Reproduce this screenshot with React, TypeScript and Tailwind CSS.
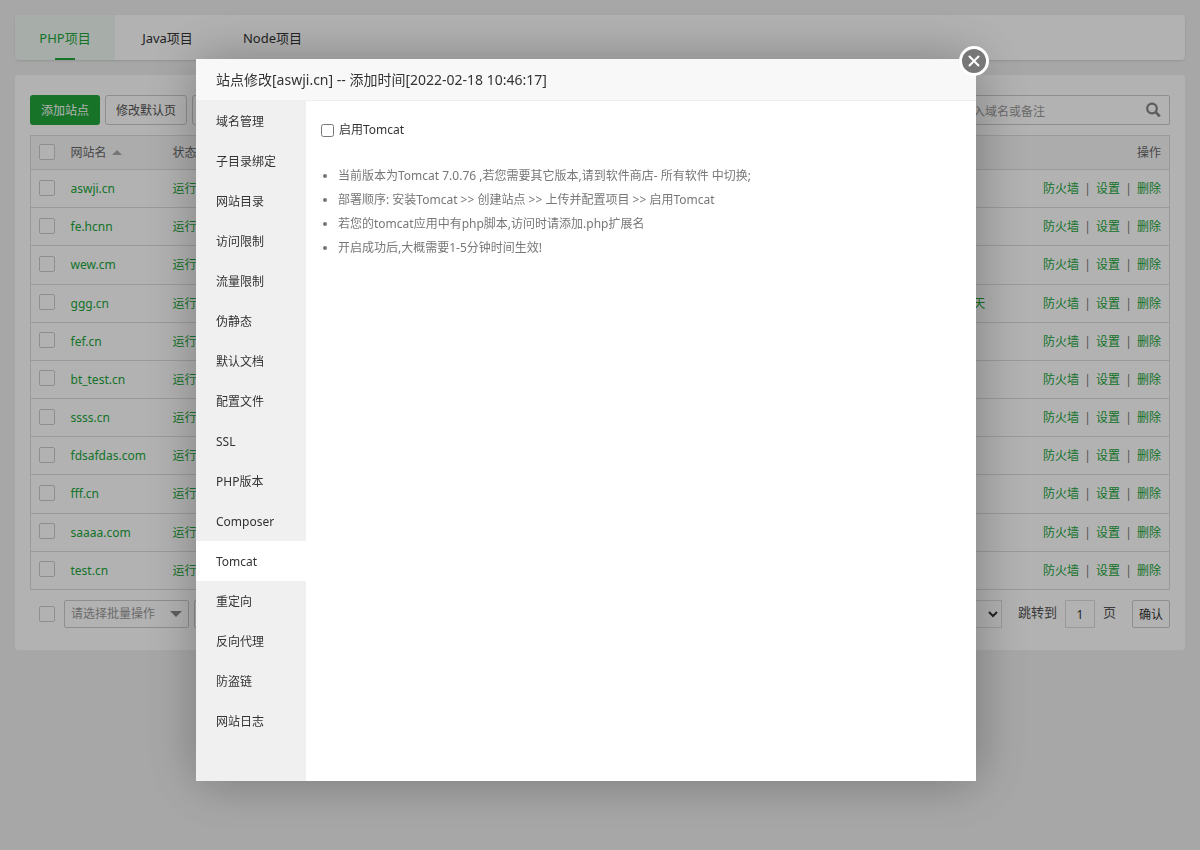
import React from 'react';

const tabs = ['PHP项目', 'Java项目', 'Node项目'];

const sites = [
  { name: 'aswji.cn', ssl: '未部署' },
  { name: 'fe.hcnn', ssl: '未部署' },
  { name: 'wew.cm', ssl: '未部署' },
  { name: 'ggg.cn', ssl: '剩余89天' },
  { name: 'fef.cn', ssl: '未部署' },
  { name: 'bt_test.cn', ssl: '未部署' },
  { name: 'ssss.cn', ssl: '未部署' },
  { name: 'fdsafdas.com', ssl: '未部署' },
  { name: 'fff.cn', ssl: '未部署' },
  { name: 'saaaa.com', ssl: '未部署' },
  { name: 'test.cn', ssl: '未部署' },
];

const menu = [
  '域名管理',
  '子目录绑定',
  '网站目录',
  '访问限制',
  '流量限制',
  '伪静态',
  '默认文档',
  '配置文件',
  'SSL',
  'PHP版本',
  'Composer',
  'Tomcat',
  '重定向',
  '反向代理',
  '防盗链',
  '网站日志',
];

const tips = [
  '当前版本为Tomcat 7.0.76 ,若您需要其它版本,请到软件商店- 所有软件 中切换;',
  '部署顺序: 安装Tomcat >> 创建站点 >> 上传并配置项目 >> 启用Tomcat',
  '若您的tomcat应用中有php脚本,访问时请添加.php扩展名',
  '开启成功后,大概需要1-5分钟时间生效!',
];

const RowCheck: React.FC<{ label: string }> = ({ label }) => (
  <input
    type="checkbox"
    aria-label={label}
    className="block size-4 appearance-none rounded-xs border border-[#ccc] bg-white checked:bg-[#20a53a]"
  />
);

const Tabs: React.FC = () => (
  <nav className="flex h-[45px] overflow-hidden rounded bg-white shadow-sm">
    {tabs.map((tab, i) => (
      <button
        key={tab}
        type="button"
        className={
          i === 0
            ? 'relative w-[100px] bg-[#f0f9f3] text-[13px] text-[#20a53a]'
            : 'w-[105px] text-[13px] text-[#333]'
        }
      >
        {tab}
        {i === 0 && <span className="absolute bottom-0 left-10 h-0.5 w-5 bg-[#20a53a]" />}
      </button>
    ))}
  </nav>
);

const Toolbar: React.FC = () => (
  <div className="flex items-center gap-[5px]">
    <button type="button" className="h-[30px] rounded-[3px] bg-[#20a53a] px-[11px] pt-0.5 text-white">
      添加站点
    </button>
    <button type="button" className="h-[30px] rounded-[3px] border border-[#ccc] px-2.5 pt-0.5 text-[#555]">
      修改默认页
    </button>
    <button type="button" aria-label="默认站点" className="h-[30px] w-[70px] rounded-[3px] border border-[#ccc]" />
    <div className="relative ml-auto w-[230px]">
      <input
        type="text"
        aria-label="搜索站点"
        placeholder="请输入域名或备注"
        className="block h-[30px] w-full rounded-xs border border-[#ccc] pt-0.5 pr-9 pl-2 placeholder:text-[#999]"
      />
      <button type="button" aria-label="搜索" className="absolute top-[7px] right-2 text-[#858585]">
        <svg viewBox="0 0 16 16" className="size-4" fill="none" stroke="currentColor">
          <circle cx="6" cy="6.5" r="4.8" strokeWidth="2.2" />
          <path d="M9.6 10.2 13.8 14.4" strokeWidth="2.6" />
        </svg>
      </button>
    </div>
  </div>
);

const SiteTable: React.FC = () => (
  <table className="mt-2.5 h-[455px] w-full table-fixed border-collapse border border-[#ddd] text-left">
    <thead>
      <tr className="h-[34px] border-b border-[#ddd] bg-[#f6f6f6] text-[#666]">
        <th className="w-8 pb-px pl-2 font-normal">
          <RowCheck label="全选" />
        </th>
        <th className="w-[102px] pl-2 font-normal">
          <span className="flex items-center gap-[5px]">
            网站名
            <svg viewBox="0 0 10 5" className="h-[5px] w-2.5" fill="#aaa">
              <path d="M5 0 10 5H0z" />
            </svg>
          </span>
        </th>
        <th className="pl-2 font-normal">状态</th>
        <th className="w-[66px] pl-2 font-normal">SSL</th>
        <th className="w-[176px] pr-2 text-right font-normal">操作</th>
      </tr>
    </thead>
    <tbody>
      {sites.map((site) => (
        <tr key={site.name} className="h-[38px] border-b border-[#ddd] text-[#20a53a]">
          <td className="pb-0.5 pl-2">
            <RowCheck label={site.name} />
          </td>
          <td className="pt-px pl-2">
            <a href="#">{site.name}</a>
          </td>
          <td className="pt-px pl-2">
            <a href="#">运行中</a>
          </td>
          <td className="pt-px pl-2 whitespace-nowrap">
            <a href="#">{site.ssl}</a>
          </td>
          <td className="pt-px pr-2 text-right whitespace-nowrap">
            <a href="#">防火墙</a>
            <span className="inline-block w-[17px] text-center text-[#777]">|</span>
            <a href="#">设置</a>
            <span className="inline-block w-[17px] text-center text-[#777]">|</span>
            <a href="#">删除</a>
          </td>
        </tr>
      ))}
    </tbody>
  </table>
);

const Footer: React.FC = () => (
  <div className="mt-2.5 flex h-7 items-center pl-[9px]">
    <RowCheck label="选择全部站点" />
    <div className="relative ml-[9px]">
      <select
        aria-label="批量操作"
        className="block h-7 w-[125px] appearance-none rounded-xs border border-[#ccc] pl-1.5 text-[#999]"
      >
        <option>请选择批量操作</option>
      </select>
      <svg viewBox="0 0 12 6" className="pointer-events-none absolute top-[11px] right-[7px] h-1.5 w-3" fill="#888">
        <path d="M0 0H12L6 6z" />
      </svg>
    </div>
    <button type="button" aria-label="批量操作" className="ml-[5px] h-7 w-[70px] rounded-xs border border-[#ccc]" />
    <select aria-label="每页条数" className="ml-auto h-7 w-20 border border-[#ddd] text-[#333]">
      <option>20条/页</option>
    </select>
    <label htmlFor="page" className="ml-4 pb-1 text-[13px] text-[#555]">
      跳转到
    </label>
    <input id="page" type="text" defaultValue="1" className="ml-2 h-7 w-[30px] border border-[#ddd] text-center text-[#333]" />
    <span className="ml-2 pb-1 text-[13px] text-[#555]">页</span>
    <button type="button" className="ml-4 h-7 w-[38px] rounded-xs border border-[#ccc] pt-0.5 text-[#333]">
      确认
    </button>
  </div>
);

const SiteDialog: React.FC = () => (
  <div className="fixed inset-0 flex items-center justify-center bg-black/30 pr-7 pb-2.5">
    <div
      role="dialog"
      aria-labelledby="dialog-title"
      className="relative w-[780px] bg-white shadow-[1px_1px_50px_rgba(0,0,0,0.3)]"
    >
      <h2 id="dialog-title" className="h-[42px] border-b border-[#eee] bg-[#f8f8f8] pl-5 text-[14px] leading-[41px] text-[#333]">
        站点修改[aswji.cn] -- 添加时间[2022-02-18 10:46:17]
      </h2>
      <button
        type="button"
        aria-label="关闭"
        className="absolute -top-[13px] -right-[13px] flex size-[30px] items-center justify-center rounded-full border-3 border-white bg-[#777]"
      >
        <svg viewBox="0 0 12 12" className="size-3" fill="none" stroke="#fff" strokeWidth="2" strokeLinecap="round">
          <path d="M1.5 1.5 10.5 10.5M10.5 1.5 1.5 10.5" />
        </svg>
      </button>
      <div className="flex min-h-[680px]">
        <nav className="w-[110px] bg-[#f0f0f0]">
          {menu.map((item) => (
            <button
              key={item}
              type="button"
              className={
                item === 'Tomcat'
                  ? 'block h-10 w-full bg-white pt-0.5 pl-5 text-left text-[#333]'
                  : 'block h-10 w-full pt-0.5 pl-5 text-left text-[#333]'
              }
            >
              {item}
            </button>
          ))}
        </nav>
        <div className="flex-1 p-[15px]">
          <label className="flex h-7 items-center gap-[5px] text-[#333]">
            <input type="checkbox" className="size-[13px]" />
            启用Tomcat
          </label>
          <ul className="mt-5 list-disc pl-[17px] leading-6 text-[#777]">
            {tips.map((tip) => (
              <li key={tip}>{tip}</li>
            ))}
          </ul>
        </div>
      </div>
    </div>
  </div>
);

const App: React.FC = () => {
  return (
    <div className="min-h-screen bg-[#f0f0f0] p-[15px] font-['Noto_Sans','Noto_Sans_CJK_SC',sans-serif] text-[12px] leading-[18px]">
      <Tabs />
      <main className="mt-[15px] rounded bg-white px-[15px] pt-5 pb-[22px]">
        <Toolbar />
        <SiteTable />
        <Footer />
      </main>
      <SiteDialog />
    </div>
  );
};

export default App;
